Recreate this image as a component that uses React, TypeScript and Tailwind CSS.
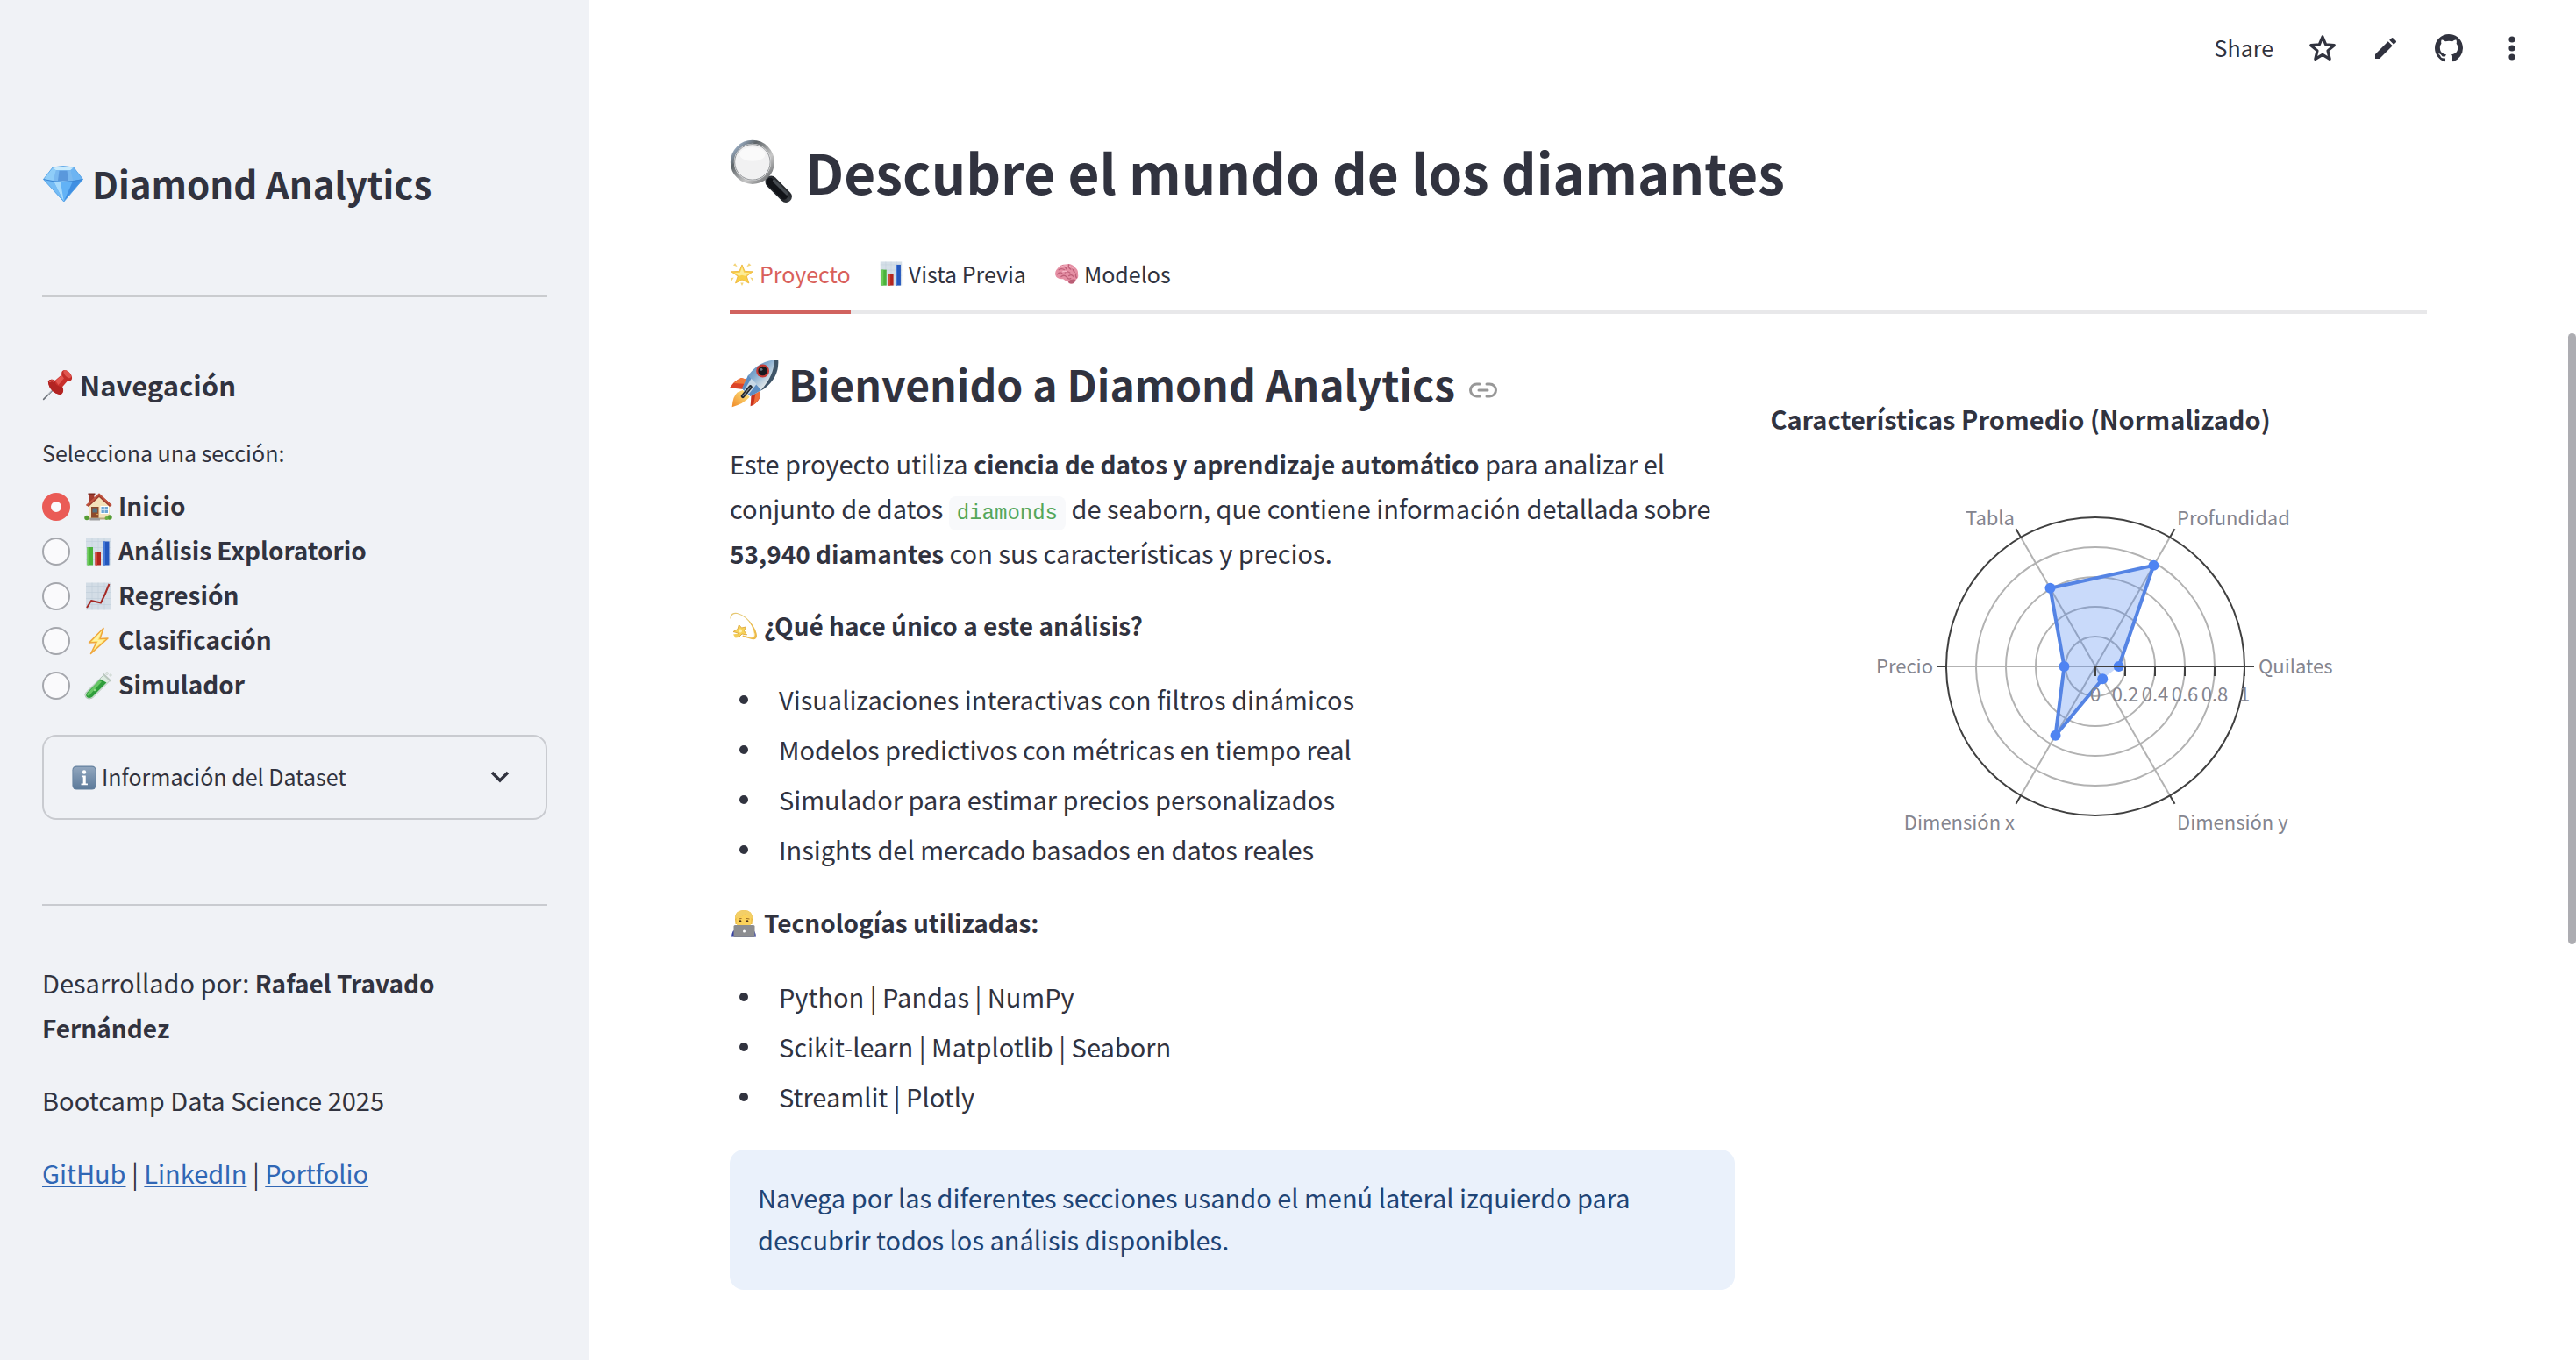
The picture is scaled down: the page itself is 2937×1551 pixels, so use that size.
import { useState, type ReactNode } from "react";
import { MdEdit } from "react-icons/md";

type IconProps = { className: string };

function Emoji({ className, children }: { className: string; children: ReactNode }) {
  return (
    <svg viewBox="0 0 64 64" className={className} aria-hidden="true">
      {children}
    </svg>
  );
}

function Gem({ className }: IconProps) {
  return (
    <Emoji className={className}>
      <defs>
        <linearGradient id="gemBody" x1="0" y1="0" x2="1" y2="1">
          <stop offset="0" stopColor="#a9dcfb" />
          <stop offset="1" stopColor="#3c8fe6" />
        </linearGradient>
      </defs>
      <path d="M16 8Q32 4 48 8L62 26 33 60 2 26Z" fill="url(#gemBody)" />
      <path d="M2 26L16 8 21 12 17 28Z" fill="#8fcdf8" />
      <path d="M62 26L48 8 43 12 47 28Z" fill="#6db4f2" />
      <path d="M21 12L43 12 47 28Q32 31 17 28Z" fill="#7ab9f0" />
      <path d="M26 13L38 13 40 28H24Z" fill="#5a98dc" />
      <path d="M16 8Q32 4 48 8L43 12H21Z" fill="#c9ebfd" />
      <path d="M17 28Q32 31 47 28L33 60Z" fill="#62b2f6" />
      <path d="M17 28L28 30 33 60Z" fill="#a6dafc" />
      <path d="M2 26L17 28 33 60Z" fill="#74bcf5" />
      <path d="M47 28L62 26 33 60Z" fill="#3f8fe2" />
      <path d="M2 26Q32 34 62 26" fill="none" stroke="#3b86d3" strokeWidth="1.4" />
      <path d="M16 8Q32 4 48 8L62 26 33 60 2 26Z" fill="none" stroke="#5aa5e6" strokeWidth="1.2" />
    </Emoji>
  );
}

function Pin({ className }: IconProps) {
  return (
    <Emoji className={className}>
      <path d="M25 39L3 61" stroke="#6c7178" strokeWidth="3" strokeLinecap="round" />
      <path d="M24 38L10 53" stroke="#c9ced4" strokeWidth="2" />
      <path d="M12 24Q18 18 26 23L41 10 53 22 41 36Q46 46 38 52 26 50 20 43 13 36 12 24Z" fill="#c9302c" />
      <path d="M12 24Q18 18 26 23 25 34 41 36 46 46 38 52 26 50 20 43 13 36 12 24Z" fill="#b22422" />
      <path d="M27 24L42 10 47 15 33 32Z" fill="#e35750" />
      <ellipse cx="50" cy="13" rx="13" ry="8" transform="rotate(48 50 13)" fill="#c12d29" />
      <ellipse cx="51" cy="10" rx="10" ry="5" transform="rotate(48 51 10)" fill="#e0554e" />
      <path d="M15 26Q19 22 24 25" fill="none" stroke="#ee7a72" strokeWidth="2.5" />
    </Emoji>
  );
}

function House({ className }: IconProps) {
  return (
    <Emoji className={className}>
      <rect x="11" y="3" width="12" height="22" fill="#a33a2c" />
      <rect x="9" y="1" width="16" height="5" fill="#7d2a20" />
      <path d="M10 28L34 5 58 28V58H10Z" fill="#f4e2ba" />
      <path d="M34 1L63 28 58 32 34 10 10 32 4 28Z" fill="#9d3b2d" />
      <path d="M34 1L63 28 60 30 34 6 8 30 4 28Z" fill="#c2543f" />
      <rect x="16" y="32" width="17" height="27" fill="#8d4a2b" />
      <rect x="19" y="35" width="11" height="10" fill="#55717f" />
      <circle cx="30" cy="49" r="1.5" fill="#f3cb5b" />
      <rect x="37" y="30" width="19" height="18" fill="#fff" />
      <rect x="39" y="32" width="15" height="14" fill="#6fa6d3" />
      <path d="M46.500 32V46M39 39H54" stroke="#dfeefa" strokeWidth="1.5" />
      <rect x="10" y="57" width="48" height="4" fill="#b9a67e" />
      <rect x="13" y="58" width="23" height="5" fill="#9d9d9d" />
      <circle cx="6" cy="57" r="5.500" fill="#549c33" />
      <circle cx="58" cy="56" r="5.500" fill="#549c33" />
      <circle cx="51" cy="58" r="4" fill="#6aaf40" />
    </Emoji>
  );
}

function Bars({ className }: IconProps) {
  return (
    <Emoji className={className}>
      <rect x="4" y="1" width="56" height="62" fill="#d5dfe8" />
      <path d="M4 9H60M4 23H60M4 37H60M4 51H60M18 1V63M32 1V63M46 1V63" stroke="#bfcddb" strokeWidth="1" />
      <rect x="7" y="22" width="13" height="41" fill="#4bb33c" />
      <rect x="25" y="34" width="13" height="29" fill="#b3261f" />
      <rect x="44" y="9" width="13" height="54" fill="#2457bd" />
      <path d="M7 22H12V63H7Z" fill="#6ccb58" />
      <path d="M25 34H30V63H25Z" fill="#cf473c" />
      <path d="M44 9H48V63H44Z" fill="#4579d8" />
    </Emoji>
  );
}

function Trend({ className }: IconProps) {
  return (
    <Emoji className={className}>
      <rect x="4" y="1" width="56" height="62" fill="#d3dde6" />
      <path d="M4 9H60M4 23H60M4 37H60M4 51H60M18 1V63M32 1V63M46 1V63" stroke="#bac9d7" strokeWidth="1" />
      <path d="M6 58L16 42 38 47 48 26 57 4" fill="none" stroke="#a52a25" strokeWidth="4" strokeLinejoin="round" />
    </Emoji>
  );
}

function Bolt({ className }: IconProps) {
  return (
    <Emoji className={className}>
      <path
        d="M44 3L11 36 28 35 15 61 54 26 36 27Z"
        fill="#fbe36a"
        stroke="#efa63c"
        strokeWidth="3"
        strokeLinejoin="round"
      />
      <path d="M40 9L18 33 32 32 22 51 46 29 31 30Z" fill="#fff2a6" />
    </Emoji>
  );
}

function TestTube({ className }: IconProps) {
  return (
    <Emoji className={className}>
      <path d="M45 7L59 20 19 60Q10 65 4 59 -1 53 5 46Z" fill="#dcebe0" stroke="#9fb3a5" strokeWidth="1.500" />
      <path d="M37 17L51 25 18 58Q11 62 6 58 2 53 7 47Z" fill="#2f9d3b" />
      <path d="M34 20L40 23 11 55Q6 56 6 51Z" fill="#67c765" />
      <path d="M44 6L60 21" stroke="#b9c6be" strokeWidth="4" strokeLinecap="round" />
      <circle cx="52" cy="4" r="3" fill="#e5ebe7" stroke="#b7c2bb" />
      <circle cx="60" cy="8" r="2.500" fill="#e5ebe7" stroke="#b7c2bb" />
      <circle cx="24" cy="42" r="2.500" fill="#8fdc86" />
    </Emoji>
  );
}

function InfoBadge({ className }: IconProps) {
  return (
    <Emoji className={className}>
      <defs>
        <linearGradient id="infoTile" x1="0" y1="0" x2="0" y2="1">
          <stop offset="0" stopColor="#91a6be" />
          <stop offset="1" stopColor="#5c7a9a" />
        </linearGradient>
      </defs>
      <rect x="1" y="1" width="62" height="62" rx="11" fill="#64809e" />
      <rect x="3" y="4" width="58" height="57" rx="9" fill="url(#infoTile)" />
      <circle cx="32" cy="17" r="5" fill="#fff" />
      <path d="M25 26H36V47H41V51H24V47H29V30H25Z" fill="#fff" />
    </Emoji>
  );
}

function Magnifier({ className }: IconProps) {
  return (
    <Emoji className={className}>
      <defs>
        <linearGradient id="lensRim" x1="0" y1="0" x2="1" y2="1">
          <stop offset="0" stopColor="#b9d3f2" />
          <stop offset="0.300" stopColor="#5e6468" />
          <stop offset="0.650" stopColor="#c9c9c9" />
          <stop offset="1" stopColor="#55585b" />
        </linearGradient>
        <linearGradient id="lensHandle" x1="0" y1="1" x2="1" y2="0">
          <stop offset="0" stopColor="#0d0f12" />
          <stop offset="0.500" stopColor="#3c4046" />
          <stop offset="1" stopColor="#0d0f12" />
        </linearGradient>
      </defs>
      <path d="M37 38L42 43" stroke="#9a9c9e" strokeWidth="6" />
      <path d="M42 43L57 58" stroke="url(#lensHandle)" strokeWidth="12" strokeLinecap="round" />
      <path d="M41 43L55 57" stroke="#111318" strokeWidth="8" strokeLinecap="round" />
      <path d="M45 42L58 55" stroke="#454a50" strokeWidth="3" strokeLinecap="round" />
      <circle cx="23" cy="23" r="20.500" fill="#f1f1f2" stroke="url(#lensRim)" strokeWidth="3.500" />
      <circle cx="23" cy="23" r="18" fill="none" stroke="#85888b" strokeWidth="0.800" />
      <ellipse cx="23" cy="15" rx="13" ry="7" fill="#fafafa" />
    </Emoji>
  );
}

function Star({ className }: IconProps) {
  return (
    <Emoji className={className}>
      <path
        d="M32 9L39 26 60 27 44 39 50 57 32 48 15 57 21 39 4 27 25 26Z"
        fill="#f8cf48"
        stroke="#eeb63a"
        strokeWidth="2"
        strokeLinejoin="round"
      />
      <path d="M32 14L37 29 52 30 40 38 32 36 24 38 13 30 27 29Z" fill="#fdec97" />
      <path d="M14 5L20 14 9 10ZM50 5L44 14 56 10ZM2 44L11 42 5 51ZM62 44L53 42 59 51ZM28 56H36L32 64Z" fill="#f3d479" />
    </Emoji>
  );
}

function Brain({ className }: IconProps) {
  return (
    <Emoji className={className}>
      <path
        d="M3 36Q1 25 9 18 16 8 30 8 44 4 53 15 63 22 62 34 64 44 56 48 52 59 43 58 38 60 36 53 28 51 23 46 6 47 3 36Z"
        fill="#e58fa4"
      />
      <path d="M36 52Q46 44 56 48 53 60 43 58 38 58 36 52Z" fill="#b95d75" />
      <path
        d="M8 34Q14 27 20 31M12 22Q20 17 27 23M22 12Q30 14 32 21M38 9Q36 18 43 21M50 15Q46 22 53 28M28 30Q35 24 41 30M18 40Q26 34 32 41M38 38Q46 33 50 40M57 32Q54 38 58 43M33 41Q36 48 43 45"
        fill="none"
        stroke="#bf6079"
        strokeWidth="3"
        strokeLinecap="round"
      />
      <path d="M14 17Q22 10 32 12M40 13Q48 15 51 20M22 27Q28 24 32 27" fill="none" stroke="#f7bac8" strokeWidth="2.500" strokeLinecap="round" />
    </Emoji>
  );
}

function Rocket({ className }: IconProps) {
  return (
    <Emoji className={className}>
      <defs>
        <linearGradient id="hull" x1="0" y1="0" x2="1" y2="1">
          <stop offset="0" stopColor="#3b6ea8" />
          <stop offset="0.400" stopColor="#83abd0" />
          <stop offset="0.700" stopColor="#e9ecea" />
          <stop offset="1" stopColor="#6b7680" />
        </linearGradient>
        <linearGradient id="flame" x1="1" y1="0" x2="0" y2="1">
          <stop offset="0" stopColor="#fff08a" />
          <stop offset="1" stopColor="#f08a28" />
        </linearGradient>
      </defs>
      <path d="M17 41L26 50Q18 59 3 63 4 49 10 44Z" fill="url(#flame)" />
      <path d="M15 25L25 28 18 40 0 38Q6 28 15 25Z" fill="#dc4327" />
      <path d="M15 25L25 28 22 33 5 32Q10 27 15 25Z" fill="#f07a3a" />
      <path d="M28 47L39 38 40 49Q36 59 27 62Z" fill="#c9331f" />
      <path d="M34 43L39 38 40 49Q36 57 31 60Z" fill="#ee6f3a" />
      <path d="M63 1Q65 24 45 39L27 49 16 39 24 22Q38 2 63 1Z" fill="url(#hull)" />
      <path d="M63 1Q65 24 45 39L40 42Q58 22 58 2Z" fill="#3f5568" />
      <path d="M24 22L41 41 27 49 16 39Z" fill="#5c8dc2" />
      <path d="M28 26L35 33 25 46 19 41Z" fill="#c7d8e6" />
      <circle cx="43" cy="16" r="8.500" fill="#c63a34" />
      <circle cx="43" cy="16" r="6" fill="#17191d" />
      <circle cx="41" cy="14" r="1.800" fill="#6c7884" />
      <path d="M27 37L17 49" stroke="#22262c" strokeWidth="5" strokeLinecap="round" />
      <path d="M27 37L17 49" stroke="#7d858d" strokeWidth="1.500" />
    </Emoji>
  );
}

function Dizzy({ className }: IconProps) {
  return (
    <Emoji className={className}>
      <path d="M2 14Q3 1 17 3 38 8 53 33 66 56 55 61" fill="none" stroke="#e6c873" strokeWidth="2.500" strokeLinecap="round" />
      <path d="M42 18Q60 38 62 54 62 64 50 62L29 56 30 53Q47 58 54 58 59 55 55 44 51 31 42 18Z" fill="#ecba4b" />
      <path d="M50 33Q58 48 55 57 50 61 34 56 50 61 57 54 58 46 50 33Z" fill="#fbe08a" />
      <path d="M21 29L27 36 37 34 33 43 39 52 28 50 20 58 19 48 8 45 18 39Z" fill="#f7d35a" stroke="#dda63a" strokeWidth="1.800" />
      <path d="M8 51L19 49 20 58 13 59Z" fill="#f3cd58" />
      <circle cx="24" cy="43" r="4" fill="#fff2b5" />
    </Emoji>
  );
}

function Technologist({ className }: IconProps) {
  return (
    <Emoji className={className}>
      <path d="M4 63Q5 45 20 43H46Q59 46 60 63Z" fill="#3541a3" />
      <path d="M12 22Q11 2 33 2 53 3 52 22L51 34H13Z" fill="#e9b73f" />
      <path d="M15 19Q30 17 36 10 44 17 49 19V31Q46 46 32 46 17 46 15 31Z" fill="#fbd25b" />
      <path d="M12 22Q12 2 33 2 53 3 52 22L48 19Q40 16 36 10 28 18 16 19Z" fill="#f3cf67" />
      <path d="M20 22L27 21M38 21L45 22" stroke="#9a6a22" strokeWidth="2" />
      <circle cx="24" cy="27" r="2.500" fill="#4c3015" />
      <circle cx="40" cy="27" r="2.500" fill="#4c3015" />
      <rect x="9" y="36" width="48" height="27" rx="3" fill="#8c8d90" />
      <path d="M9 60H57V63H9Z" fill="#6f7073" />
      <circle cx="33" cy="50" r="3" fill="#fff" />
    </Emoji>
  );
}

function LinkIcon({ className }: IconProps) {
  return (
    <svg viewBox="0 0 32 32" className={className} fill="none" stroke="currentColor" strokeWidth="3" strokeLinecap="round">
      <path d="M12 9H8.500A6.500 6.500 0 0 0 8.500 23H12M20 9H23.500A6.500 6.500 0 0 1 23.500 23H20M11 16H21" />
    </svg>
  );
}

const sections = [
  { name: "Inicio", Icon: House },
  { name: "Análisis Exploratorio", Icon: Bars },
  { name: "Regresión", Icon: Trend },
  { name: "Clasificación", Icon: Bolt },
  { name: "Simulador", Icon: TestTube },
];

function Sidebar() {
  const [selected, setSelected] = useState("Inicio");
  return (
    <aside className="w-[672px] shrink-0 bg-[#f0f2f6] px-12 pt-[180px] pb-12">
      <h2 className="flex items-center gap-[9px] text-[42px] leading-[58px] font-bold">
        <Gem className="size-12 shrink-0" />
        <span>Diamond Analytics</span>
      </h2>
      <hr className="mt-[99px] border-t-2 border-[#cacccf]" />
      <h3 className="mt-[78px] flex items-center gap-[7px] text-[31px] leading-[44px] font-bold">
        <Pin className="size-9 shrink-0" />
        <span>Navegación</span>
      </h3>

      <fieldset className="mt-[35px]">
        <legend className="mb-4 text-[25px] leading-[40px]">Selecciona una sección:</legend>
        {sections.map(({ name, Icon }) => (
          <label key={name} className="flex h-[51px] items-center">
            <input
              type="radio"
              name="seccion"
              value={name}
              checked={selected === name}
              onChange={() => setSelected(name)}
              className="size-8 shrink-0 appearance-none rounded-full border-2 border-[#a5a7ad] bg-[#fafafc] checked:border-[10px] checked:border-[#ea5b56]"
            />
            <Icon className="ml-4 size-8 shrink-0" />
            <span className="ml-[7px] pb-1 text-[28px] leading-[40px] font-bold">{name}</span>
          </label>
        ))}
      </fieldset>

      <button
        type="button"
        aria-expanded="false"
        className="mt-[31px] flex h-[97px] w-full items-center rounded-2xl border-2 border-[#c9cbd0] px-8 text-left"
      >
        <InfoBadge className="size-7 shrink-0" />
        <span className="ml-[6px] pb-[3px] text-[25px] leading-[40px]">Información del Dataset</span>
        <svg viewBox="0 0 32 32" className="mr-1 ml-auto size-8" fill="none" stroke="currentColor" strokeWidth="3.4">
          <path d="M7 10L16 19 25 10" />
        </svg>
      </button>

      <hr className="mt-24 border-t-2 border-[#c9cbd0]" />

      <div className="mt-[62px] flex flex-col gap-8 text-[29px] leading-[51px]">
        <p>
          Desarrollado por: <strong className="text-[28px] leading-[49px] font-bold">Rafael Travado Fernández</strong>
        </p>
        <p>Bootcamp Data Science 2025</p>
        <p>
          <a href="#github" className="text-[#3067b5] underline">GitHub</a> |{" "}
          <a href="#linkedin" className="text-[#3067b5] underline">LinkedIn</a> |{" "}
          <a href="#portfolio" className="text-[#3067b5] underline">Portfolio</a>
        </p>
      </div>
    </aside>
  );
}

function Toolbar() {
  return (
    <header className="flex h-[110px] items-center justify-end gap-10 pr-[57px]">
      <button type="button" className="pb-[3px] text-[25px] leading-[40px]">Share</button>
      <button type="button" aria-label="Favorito">
        <svg viewBox="0 0 32 32" className="size-8" fill="none" stroke="currentColor" strokeWidth="3.200" strokeLinejoin="round">
          <path d="M16 3L19.700 11.900 29.300 12.700 22 18.900 24.200 28.300 16 23.300 7.800 28.300 10 18.900 2.700 12.700 12.300 11.900Z" />
        </svg>
      </button>
      <button type="button" aria-label="Editar">
        <MdEdit className="size-8" />
      </button>
      <a href="#repo" aria-label="GitHub">
        <svg viewBox="0 0 16 16" className="size-8" fill="currentColor">
          <path d="M8 0C3.58 0 0 3.58 0 8c0 3.54 2.29 6.53 5.47 7.59.4.07.55-.17.55-.38 0-.19-.01-.82-.01-1.49-2.01.37-2.53-.49-2.69-.94-.09-.23-.48-.94-.82-1.13-.28-.15-.68-.52-.01-.53.63-.01 1.08.58 1.23.82.72 1.21 1.87.87 2.33.66.07-.52.28-.87.51-1.07-1.78-.2-3.64-.89-3.64-3.95 0-.87.31-1.59.82-2.15-.08-.2-.36-1.02.08-2.12 0 0 .67-.21 2.2.82.64-.18 1.32-.27 2-.27.68 0 1.36.09 2 .27 1.53-1.04 2.2-.82 2.2-.82.44 1.1.16 1.92.08 2.12.51.56.82 1.27.82 2.15 0 3.07-1.87 3.75-3.65 3.95.29.25.54.73.54 1.48 0 1.07-.01 1.93-.01 2.2 0 .21.15.46.55.38A8.013 8.013 0 0016 8c0-4.42-3.58-8-8-8z" />
        </svg>
      </a>
      <button type="button" aria-label="Menú">
        <svg viewBox="0 0 32 32" className="size-8" fill="currentColor">
          <circle cx="16" cy="6" r="3.600" />
          <circle cx="16" cy="16" r="3.600" />
          <circle cx="16" cy="26" r="3.600" />
        </svg>
      </button>
    </header>
  );
}

const tabs = [
  { name: "Proyecto", Icon: Star },
  { name: "Vista Previa", Icon: Bars },
  { name: "Modelos", Icon: Brain },
];

function Tabs() {
  const [active, setActive] = useState("Proyecto");
  return (
    <div role="tablist" className="mt-[54px] flex gap-8 shadow-[inset_0_-4px_0_#e8e8ea]">
      {tabs.map(({ name, Icon }) => (
        <button
          key={name}
          type="button"
          role="tab"
          aria-selected={active === name}
          onClick={() => setActive(name)}
          className="flex items-center gap-[6px] border-b-4 border-transparent pb-[22px] text-[25px] leading-[40px] aria-selected:border-[#d1635f] aria-selected:text-[#d9605b]"
        >
          <Icon className="size-7 shrink-0" />
          <span>{name}</span>
        </button>
      ))}
    </div>
  );
}

const RADIUS = 170;
const CX = 320;
const CY = 200;

const axes = [
  { label: "Quilates", value: 0.157, x: 506, y: 208, anchor: "start" },
  { label: "Profundidad", value: 0.782, x: 413, y: 39, anchor: "start" },
  { label: "Tabla", value: 0.606, x: 228, y: 39, anchor: "end" },
  { label: "Precio", value: 0.209, x: 135, y: 208, anchor: "end" },
  { label: "Dimensión x", value: 0.535, x: 228, y: 386, anchor: "end" },
  { label: "Dimensión y", value: 0.097, x: 413, y: 386, anchor: "start" },
] as const;

function polar(index: number, r: number) {
  const angle = (index * Math.PI) / 3;
  return { x: CX + r * Math.cos(angle), y: CY - r * Math.sin(angle) };
}

function RadarChart() {
  const points = axes.map((a, i) => polar(i, a.value * RADIUS));
  const outline = points.map((p) => `${p.x},${p.y}`).join(" ");
  return (
    <svg
      viewBox="0 0 640 400"
      className="mx-auto mt-[63px] w-[640px] max-w-full text-[22px]"
      role="img"
      aria-label="Características Promedio (Normalizado)"
    >
      <g fill="none" stroke="#b2b2b2" strokeWidth="2">
        {[1, 2, 3, 4].map((n) => (
          <circle key={n} cx={CX} cy={CY} r={n * 34} />
        ))}
        {axes.map((a, i) => {
          const end = polar(i, RADIUS);
          return <line key={a.label} x1={CX} y1={CY} x2={end.x} y2={end.y} />;
        })}
      </g>
      <circle cx={CX} cy={CY} r={RADIUS} fill="none" stroke="#404040" strokeWidth="2" />
      {axes.map((a, i) => {
        const from = polar(i, RADIUS);
        const to = polar(i, RADIUS + 11);
        return <line key={a.label} x1={from.x} y1={from.y} x2={to.x} y2={to.y} stroke="#404040" strokeWidth="2" />;
      })}
      <polygon points={outline} fill="#4d84f0" fillOpacity="0.3" />
      <polyline points={outline} fill="none" stroke="#5584e4" strokeWidth="4" strokeLinejoin="round" />
      {points.map((p, i) => (
        <circle key={axes[i].label} cx={p.x} cy={p.y} r="6" fill="#4f84f2" />
      ))}
      <path
        d="M320 200H501M320 200V211M354 200V211M388 200V211M422 200V211M456 200V211M490 200V211"
        stroke="#404040"
        strokeWidth="2"
      />
      <g fill="#84858f">
        {axes.map((a) => (
          <text key={a.label} x={a.x} y={a.y} textAnchor={a.anchor}>
            {a.label}
          </text>
        ))}
        {["0", "0.2", "0.4", "0.6", "0.8", "1"].map((t, i) => (
          <text key={t} x={CX + i * 34} y="240" textAnchor="middle">
            {t}
          </text>
        ))}
      </g>
    </svg>
  );
}

function BulletList({ items }: { items: string[] }) {
  return (
    <ul className="mt-[33px] flex flex-col gap-1.5">
      {items.map((item) => (
        <li key={item} className="flex items-center pl-[11px]">
          <span className="mr-[35px] size-2.5 shrink-0 rounded-full bg-[#31333f]" />
          <span>{item}</span>
        </li>
      ))}
    </ul>
  );
}

export default function App() {
  return (
    <div className="flex min-h-screen bg-white font-['Noto_Sans_CJK_JP','Noto_Sans',sans-serif] text-[#31333f]">
      <Sidebar />
      <div className="relative min-w-0 flex-1">
        <Toolbar />
        <main className="pr-[170px] pb-16 pl-40">
          <h1 className="mt-[42px] flex items-center gap-[14px] text-[62px] leading-[86px] font-bold">
            <Magnifier className="size-[72px] shrink-0" />
            <span>Descubre el mundo de los diamantes</span>
          </h1>
          <Tabs />
          <div className="grid grid-cols-[50fr_33fr] gap-8">
            <section className="pt-[45px] text-[29px] leading-[51px]">
              <h2 className="flex items-center text-[48px] leading-[68px] font-bold">
                <Rocket className="mr-[11px] size-14 shrink-0" />
                <span>Bienvenido a Diamond Analytics</span>
                <a href="#bienvenido" aria-label="Enlace a esta sección" className="ml-4 pt-4 text-[#989898]">
                  <LinkIcon className="size-8" />
                </a>
              </h2>
              <p className="mt-8">
                Este proyecto utiliza{" "}
                <strong className="text-[28px] leading-[49px] font-bold">
                  ciencia de datos y aprendizaje automático
                </strong>{" "}
                para analizar el conjunto de datos{" "}
                <code className="rounded-lg bg-[#f8f9fb] px-[9px] py-1.5 font-['Liberation_Mono',monospace] text-[24px] leading-[28px] text-[#54a75a]">
                  diamonds
                </code>{" "}
                de seaborn, que contiene información detallada sobre{" "}
                <strong className="text-[28px] leading-[49px] font-bold">53,940 diamantes</strong> con sus
                características y precios.
              </p>
              <h4 className="mt-8 flex items-center gap-[7px] text-[28px] font-bold">
                <Dizzy className="size-8 shrink-0" />
                <span>¿Qué hace único a este análisis?</span>
              </h4>
              <BulletList
                items={[
                  "Visualizaciones interactivas con filtros dinámicos",
                  "Modelos predictivos con métricas en tiempo real",
                  "Simulador para estimar precios personalizados",
                  "Insights del mercado basados en datos reales",
                ]}
              />
              <h4 className="mt-[33px] flex items-center gap-[7px] text-[28px] font-bold">
                <Technologist className="size-8 shrink-0" />
                <span>Tecnologías utilizadas:</span>
              </h4>
              <BulletList
                items={["Python | Pandas | NumPy", "Scikit-learn | Matplotlib | Seaborn", "Streamlit | Plotly"]}
              />
              <div
                role="note"
                className="mt-[35px] rounded-2xl bg-[#eaf1fb] px-8 pt-[30px] pb-[34px] leading-[48px] text-[#1f4475]"
              >
                Navega por las diferentes secciones usando el menú lateral izquierdo para descubrir todos los análisis
                disponibles.
              </div>
            </section>
            <section className="pt-[99px]">
              <h3 className="pl-2 text-[29px] leading-[40px] font-bold">Características Promedio (Normalizado)</h3>
              <RadarChart />
            </section>
          </div>
        </main>
        <div className="absolute top-[380px] right-0 h-[697px] w-[9px] rounded-md bg-[#adadb2]" />
      </div>
    </div>
  );
}
